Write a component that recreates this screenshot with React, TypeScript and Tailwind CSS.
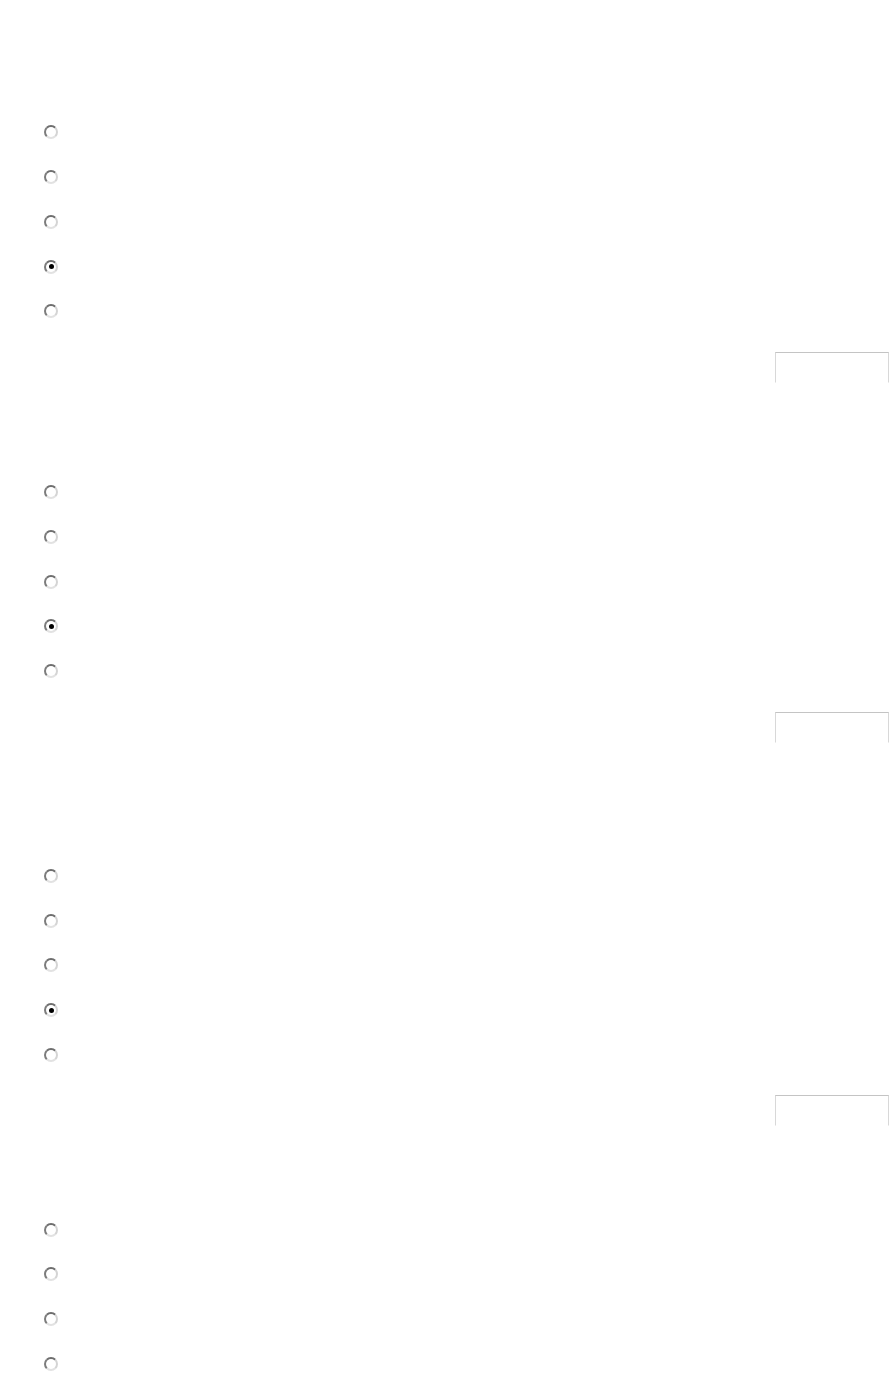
import React, {useState} from 'react';

const questions = [
    {id: 1, options: 5, answer: 3, gap: 'mt-[110px]', button: true},
    {id: 2, options: 5, answer: 3, gap: 'mt-[87px]', button: true},
    {id: 3, options: 5, answer: 3, gap: 'mt-[111px]', button: true},
    {id: 4, options: 4, answer: -1, gap: 'mt-[81px]', button: false},
];

const Radio = ({checked, onClick}: { checked: boolean; onClick: () => void }) => (
    <span
        onClick={onClick}
        className="w-[14px] h-[14px] rounded-full border-2 border-t-[#6e6e6e] border-l-[#7c7c7c] border-r-[#d4d4d4] border-b-[#e2e2e2] bg-white flex items-center justify-center cursor-pointer"
    >
        {checked && <span className="w-[5px] h-[5px] rounded-full bg-black"/>}
    </span>
);

const Question = ({q}: { q: typeof questions[number] }) => {
    const [selected, setSelected] = useState(q.answer);

    return (
        <div className={q.gap}>
            <div className="flex flex-col">
                {Array.from({length: q.options}).map((_, i) => (
                    <div key={i} className="h-[44.75px] flex items-center pl-[44px]">
                        <Radio checked={selected === i} onClick={() => setSelected(i)}/>
                    </div>
                ))}
            </div>
            {q.button && (
                <div className="flex justify-end pr-[3px] mt-[18px]">
                    <button
                        className="w-[114px] h-[31px] bg-white border border-t-[#c4c4c4] border-l-[#d8d8d8] border-r-[#d8d8d8] border-b-transparent"/>
                </div>
            )}
        </div>
    );
};

export default function App() {
    return (
        <div className="min-h-screen bg-white font-['Liberation_Sans',sans-serif] overflow-hidden">
            {questions.map(q => (
                <Question key={q.id} q={q}/>
            ))}
        </div>
    );
}
